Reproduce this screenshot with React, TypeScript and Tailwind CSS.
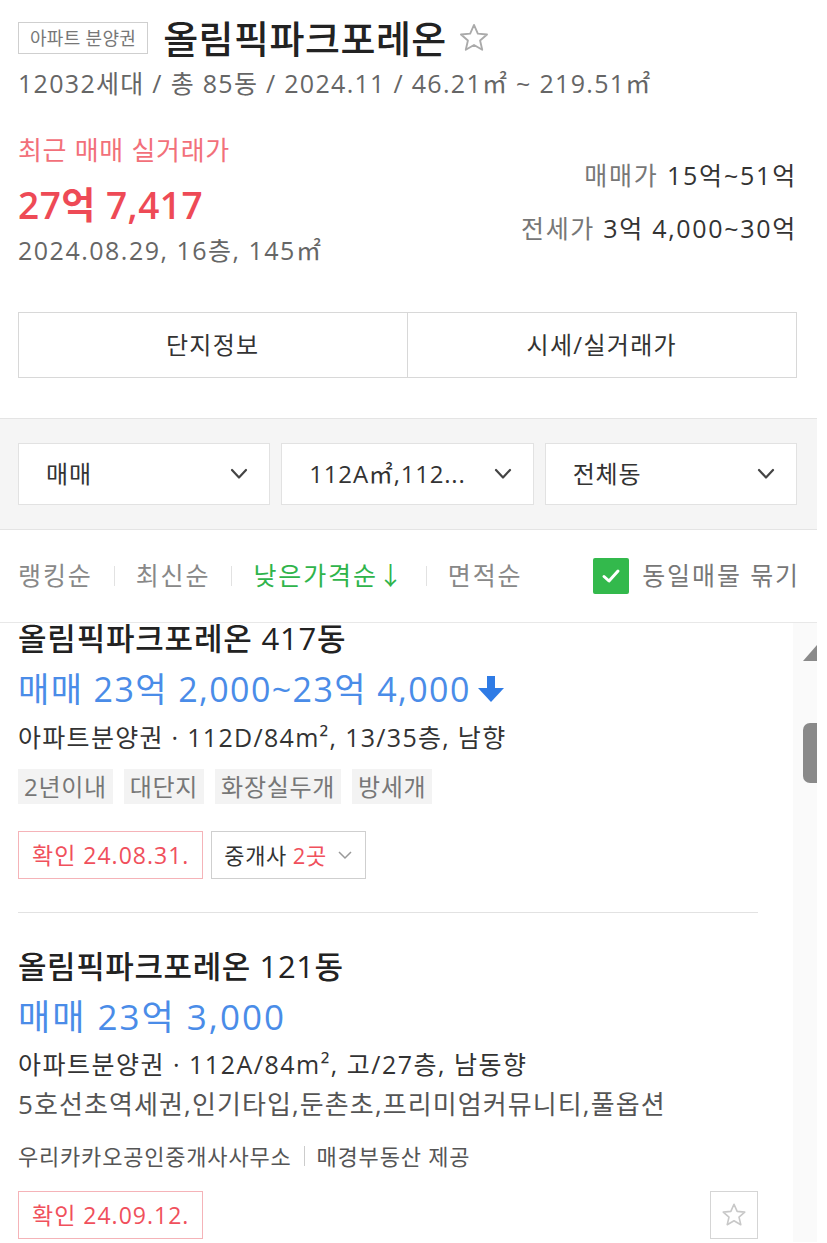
import React from "react";

const FONT = '"Open Sans", "Noto Sans CJK KR", sans-serif';

function Chevron() {
  return (
    <svg width="18" height="12" viewBox="0 0 18 12">
      <path d="M2 2 L9 9.5 L16 2" fill="none" stroke="#444" strokeWidth="2.2" strokeLinecap="round" strokeLinejoin="round" />
    </svg>
  );
}

function StarOutline({ size = 32, color = "#aaa", sw = 1.6 }: { size?: number; color?: string; sw?: number }) {
  return (
    <svg width={size} height={size} viewBox="0 0 24 24">
      <path
        d="M12 2.8 L14.7 8.9 L21.2 9.5 L16.3 13.8 L17.8 20.3 L12 16.9 L6.2 20.3 L7.7 13.8 L2.8 9.5 L9.3 8.9 Z"
        fill="none"
        stroke={color}
        strokeWidth={sw}
        strokeLinejoin="round"
      />
    </svg>
  );
}

function DownArrow() {
  return (
    <svg width="30" height="30" viewBox="0 0 30 30" className="ml-[5px]">
      <rect x="11" y="2" width="8" height="14" fill="#2f7be5" />
      <path d="M2 14 L28 14 L15 28 Z" fill="#2f7be5" />
    </svg>
  );
}

function Sep() {
  return <span className="mx-[21px] h-[20px] w-px bg-[#e2e2e2]" />;
}

function Tag({ children }: { children: React.ReactNode }) {
  return (
    <span className="flex h-[35px] items-center bg-[#f3f3f3] px-[6px] text-[24px] leading-none tracking-[0.7px] text-[#777]">
      {children}
    </span>
  );
}

function ConfirmBox({ children }: { children: React.ReactNode }) {
  return (
    <span className="flex h-[48px] items-center border border-[#f5b3b8] pl-[13px] pr-[13px] text-[23px] tracking-[1px] text-[#f0505c]">
      {children}
    </span>
  );
}

export default function App() {
  return (
    <div className="w-[827px] bg-white" style={{ fontFamily: FONT }}>
      <div className="w-[817px]">
        {/* Header */}
        <div className="pl-[18px] pr-[20px] pt-[19px]">
          <div className="flex h-[38px] items-center">
            <span className="flex h-[32px] items-center border border-[#cfcfcf] px-[11px] text-[18px] leading-none tracking-[0.3px] text-[#777]">
              아파트 분양권
            </span>
            <span className="ml-[15px] text-[38px] font-medium leading-none tracking-[0.5px] text-[#222]">
              올림픽파크포레온
            </span>
            <span className="ml-[10px] flex items-center">
              <StarOutline size={34} color="#aaa" sw={1.3} />
            </span>
          </div>
          <div className="mt-[11px] text-[25px] leading-[30px] tracking-[1.3px] text-[#666]">
            12032세대 / 총 85동 / 2024.11 / 46.21㎡ ~ 219.51㎡
          </div>

          <div className="mt-[37px] flex justify-between">
            <div>
              <div className="text-[26px] leading-[30px] tracking-[0.7px] text-[#f2707a]">최근 매매 실거래가</div>
              <div className="mt-[18px] text-[37px] font-semibold leading-[44px] tracking-[0.5px] text-[#ee4a56]">
                27억 7,417
              </div>
              <div className="mt-[8px] text-[25px] leading-[30px] tracking-[1.5px] text-[#666]">
                2024.08.29, 16층, 145㎡
              </div>
            </div>
            <div className="mt-[25px] flex flex-col items-end">
              <div className="text-[25px] leading-[30px] tracking-[1.8px]">
                <span className="text-[#777]">매매가</span> <span className="text-[#333]">15억~51억</span>
              </div>
              <div className="mt-[23px] text-[25px] leading-[30px] tracking-[1.7px]">
                <span className="text-[#777]">전세가</span> <span className="text-[#333]">3억 4,000~30억</span>
              </div>
            </div>
          </div>

          <div className="mt-[47px] grid h-[66px] grid-cols-2 border border-[#d8d8d8]">
            <div className="flex items-center justify-center border-r border-[#d8d8d8] text-[24px] tracking-[1.3px] text-[#333]">
              단지정보
            </div>
            <div className="flex items-center justify-center text-[24px] tracking-[1.3px] text-[#333]">시세/실거래가</div>
          </div>
        </div>

        {/* Filters */}
        <div className="mt-[40px] border-y border-[#e4e4e4] bg-[#f5f5f5] pb-[24px] pl-[18px] pr-[20px] pt-[24px]">
          <div className="grid grid-cols-3 gap-[11px]">
            <div className="flex h-[62px] items-center justify-between border border-[#e2e2e2] bg-white pl-[27px] pr-[21px] text-[24px] tracking-[0.8px] text-[#333]">
              <span>매매</span>
              <Chevron />
            </div>
            <div className="flex h-[62px] items-center justify-between border border-[#e2e2e2] bg-white pl-[27px] pr-[21px] text-[24px] tracking-[0.8px] text-[#333]">
              <span>112A㎡,112...</span>
              <Chevron />
            </div>
            <div className="flex h-[62px] items-center justify-between border border-[#e2e2e2] bg-white pl-[27px] pr-[21px] text-[24px] tracking-[0.8px] text-[#333]">
              <span>전체동</span>
              <Chevron />
            </div>
          </div>
        </div>

        {/* Sort row */}
        <div className="flex h-[93px] items-center justify-between border-b border-[#e8e8e8] pl-[18px] pr-[17px] text-[25px] tracking-[1.9px]">
          <div className="flex items-center text-[#888]">
            <span>랭킹순</span>
            <Sep />
            <span>최신순</span>
            <Sep />
            <span className="text-[#2fb44b]">낮은가격순↓</span>
            <Sep />
            <span>면적순</span>
          </div>
          <div className="flex items-center">
            <span className="flex h-[36px] w-[36px] items-center justify-center rounded-[2px] bg-[#33b94c]">
              <svg width="22" height="22" viewBox="0 0 22 22">
                <path d="M4 11.5 L9 16 L18 6" fill="none" stroke="#fff" strokeWidth="3" strokeLinecap="round" strokeLinejoin="round" />
              </svg>
            </span>
            <span className="ml-[13px] text-[#777]">동일매물 묶기</span>
          </div>
        </div>

        {/* List + scrollbar */}
        <div className="flex min-h-[619px]">
          <div className="flex-1 pl-[18px] pr-[35px]">
            {/* item 1 */}
            <div className="border-b border-[#e2e2e2] pb-[33px]">
              <div className="text-[31px] font-medium leading-[31px] tracking-[0.8px] text-[#222]">
                올림픽파크포레온 417동
              </div>
              <div className="mt-[15px] flex items-center text-[34px] leading-[40px] tracking-[1.4px] text-[#4a8ce8]">
                <span>매매 23억 2,000~23억 4,000</span>
                <DownArrow />
              </div>
              <div className="mt-[13px] text-[25px] leading-[30px] tracking-[1.3px] text-[#333]">
                아파트분양권 · 112D/84m², 13/35층, 남향
              </div>
              <div className="mt-[17px] flex gap-[11px]">
                <Tag>2년이내</Tag>
                <Tag>대단지</Tag>
                <Tag>화장실두개</Tag>
                <Tag>방세개</Tag>
              </div>
              <div className="mt-[27px] flex gap-[8px]">
                <ConfirmBox>확인 24.08.31.</ConfirmBox>
                <span className="flex h-[48px] items-center border border-[#cfcfcf] pl-[12px] pr-[12px] text-[22px] tracking-[0.6px] text-[#333]">
                  중개사 <span className="ml-[6px] text-[#f0505c]">2곳</span>
                  <svg width="16" height="10" viewBox="0 0 16 10" className="ml-[10px]">
                    <path d="M2 2 L8 8 L14 2" fill="none" stroke="#999" strokeWidth="1.5" />
                  </svg>
                </span>
              </div>
            </div>
            {/* item 2 */}
            <div className="pt-[37px]">
              <div className="text-[31px] font-medium leading-[32px] tracking-[0.6px] text-[#222]">
                올림픽파크포레온 121동
              </div>
              <div className="mt-[15px] text-[35px] leading-[40px] tracking-[2px] text-[#4a8ce8]">매매 23억 3,000</div>
              <div className="mt-[12px] text-[25px] leading-[30px] tracking-[1.5px] text-[#333]">
                아파트분양권 · 112A/84m², 고/27층, 남동향
              </div>
              <div className="mt-[10px] text-[26px] leading-[30px] tracking-[1.1px] text-[#555]">
                5호선초역세권,인기타입,둔촌초,프리미엄커뮤니티,풀옵션
              </div>
              <div className="mt-[24px] flex items-center text-[22px] leading-[26px] tracking-[0.8px] text-[#555]">
                <span>우리카카오공인중개사사무소</span>
                <span className="mx-[12px] h-[20px] w-px bg-[#ccc]" />
                <span>매경부동산 제공</span>
              </div>
              <div className="mt-[22px] flex items-center justify-between">
                <ConfirmBox>확인 24.09.12.</ConfirmBox>
                <span className="flex h-[48px] w-[48px] items-center justify-center border border-[#d5d5d5]">
                  <StarOutline size={28} color="#c8c8c8" sw={1.4} />
                </span>
              </div>
            </div>
          </div>
          {/* scrollbar */}
          <div className="flex w-[24px] flex-col items-end bg-[#fafafa]">
            <div className="mt-[22px] h-0 w-0 border-b-[16px] border-l-[14px] border-b-[#8a8a8a] border-l-transparent" />
            <div className="mt-[62px] h-[60px] w-[14px] rounded-l-[7px] bg-[#8a8a8a]" />
          </div>
        </div>
      </div>
    </div>
  );
}
